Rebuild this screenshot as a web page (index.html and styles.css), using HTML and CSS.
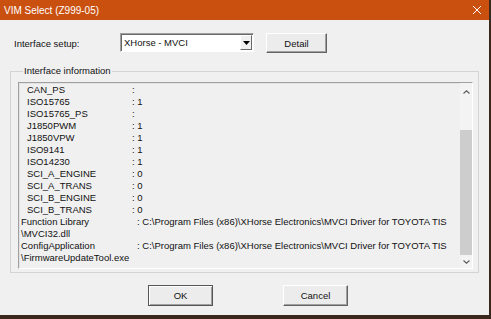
FILE: index.html
```html
<!DOCTYPE html>
<html lang="en">
<head>
  <meta charset="UTF-8" />
  <title>VIM Select (Z999-05)</title>
  <link rel="stylesheet" href="styles.css">
</head>
<body>
  <div class="window">
    <div class="titlebar">
      <span class="title">VIM Select (Z999-05)</span>
      <svg class="close" width="10" height="10" viewBox="0 0 10 10">
        <path d="M1 1 L9 9 M9 1 L1 9" stroke="#fff" stroke-width="1" fill="none" />
      </svg>
    </div>

    <div class="content">
      <!-- Interface setup row -->
      <div class="setup-row">
        <span class="setup-label">Interface setup:</span>
        <div class="combo">
          <span class="combo-text">XHorse - MVCI</span>
          <span class="combo-btn">
            <svg width="7" height="4" viewBox="0 0 7 4"><path d="M0 0 H7 L3.5 4 Z" fill="#000" /></svg>
          </span>
        </div>
        <button class="btn btn-detail">Detail</button>
      </div>

      <!-- Interface information -->
      <fieldset class="group">
        <legend>Interface information</legend>
        <div class="listbox">
          <div class="list-rows">
            <div class="row sub"><span class="key">CAN_PS</span><span class="val">:</span></div>
            <div class="row sub"><span class="key">ISO15765</span><span class="val">: 1</span></div>
            <div class="row sub"><span class="key">ISO15765_PS</span><span class="val">:</span></div>
            <div class="row sub"><span class="key">J1850PWM</span><span class="val">: 1</span></div>
            <div class="row sub"><span class="key">J1850VPW</span><span class="val">: 1</span></div>
            <div class="row sub"><span class="key">ISO9141</span><span class="val">: 1</span></div>
            <div class="row sub"><span class="key">ISO14230</span><span class="val">: 1</span></div>
            <div class="row sub"><span class="key">SCI_A_ENGINE</span><span class="val">: 0</span></div>
            <div class="row sub"><span class="key">SCI_A_TRANS</span><span class="val">: 0</span></div>
            <div class="row sub"><span class="key">SCI_B_ENGINE</span><span class="val">: 0</span></div>
            <div class="row sub"><span class="key">SCI_B_TRANS</span><span class="val">: 0</span></div>
            <div class="row"><span class="key">Function Library</span><span class="val">: C:\Program Files (x86)\XHorse Electronics\MVCI Driver for TOYOTA TIS</span></div>
            <div class="row"><span class="key">\MVCI32.dll</span></div>
            <div class="row"><span class="key">ConfigApplication</span><span class="val">: C:\Program Files (x86)\XHorse Electronics\MVCI Driver for TOYOTA TIS</span></div>
            <div class="row"><span class="key">\FirmwareUpdateTool.exe</span></div>
          </div>
          <div class="scrollbar">
            <div class="sb-arrow sb-up">
              <svg width="7" height="4" viewBox="0 0 7 4"><path d="M0.5 3.5 L3.5 0.8 L6.5 3.5" stroke="#606060" stroke-width="1.2" fill="none" /></svg>
            </div>
            <div class="sb-gap"></div>
            <div class="sb-thumb"></div>
            <div class="sb-arrow sb-down">
              <svg width="7" height="4" viewBox="0 0 7 4"><path d="M0.5 0.5 L3.5 3.2 L6.5 0.5" stroke="#606060" stroke-width="1.2" fill="none" /></svg>
            </div>
          </div>
        </div>
      </fieldset>

      <!-- Buttons -->
      <div class="button-row">
        <button class="btn btn-default">OK</button>
        <button class="btn">Cancel</button>
      </div>
    </div>
  </div>
</body>
</html>
```

FILE: styles.css
```css
html, body {
  margin: 0;
  height: 100%;
}

body {
  background-color: #3a281d;
  font-family: "Liberation Sans", Arial, sans-serif;
  font-size: 9.5px;
  color: #111;
  overflow: hidden;
}

.window {
  width: 489px;
  height: 315px;
  background-color: #f0f0f0;
  display: flex;
  flex-direction: column;
}

.titlebar {
  height: 20px;
  background-color: #ca5010;
  color: #fff;
  display: flex;
  align-items: center;
  justify-content: space-between;
  padding: 0 7px 0 4px;
  font-size: 10px;
}

.close {
  display: block;
}

.content {
  padding: 13px 10px 0 10px;
  display: flex;
  flex-direction: column;
}

/* top row */
.setup-row {
  display: flex;
  align-items: center;
  height: 20px;
}

.setup-label {
  width: 106px;
  margin-left: 4px;
}

.combo {
  width: 134px;
  height: 19px;
  box-sizing: border-box;
  background: #fff;
  border: 1px solid;
  border-color: #a0a0a0 #fff #fff #a0a0a0;
  box-shadow: inset 1px 1px 0 #696969;
  display: flex;
  align-items: center;
  justify-content: space-between;
  padding: 1px 1px 1px 3px;
  align-self: flex-start;
}

.combo-btn {
  width: 12px;
  height: 15px;
  box-sizing: border-box;
  background: #f0f0f0;
  border: 1px solid;
  border-color: #fff #696969 #696969 #fff;
  display: flex;
  align-items: center;
  justify-content: center;
}

.combo-btn svg {
  display: block;
}

.btn {
  font-family: inherit;
  font-size: 9.5px;
  color: #111;
  background: #ececec;
  border: 1px solid;
  border-color: #fff #646464 #646464 #fff;
  box-shadow: inset -1px -1px 0 #a0a0a0;
  padding: 0;
  width: 65px;
  height: 21px;
  box-sizing: border-box;
}

.btn-detail {
  margin-left: 12px;
  width: 61px;
  height: 20px;
}

.btn-default {
  border-color: #555;
  box-shadow: inset 1px 1px 0 #fff, inset -1px -1px 0 #a0a0a0;
}

/* group box */
.group {
  margin: 12px 0 0 0;
  width: 469px;
  box-sizing: border-box;
  padding: 5px 5px 3px 7px;
  border: 1px solid #d4d4d4;
  min-width: 0;
}

.group legend {
  padding: 0 1px;
  margin-left: 5px;
  line-height: 12px;
}

.listbox {
  width: 455px;
  height: 187px;
  box-sizing: border-box;
  border: 1px solid;
  border-color: #a0a0a0 #fff #fff #a0a0a0;
  box-shadow: inset 1px 1px 0 #e3e3e3;
  display: flex;
}

.list-rows {
  flex: 1;
  padding: 1px 0 0 2px;
  white-space: nowrap;
  overflow: hidden;
}

.row {
  display: flex;
  height: 12px;
  line-height: 12px;
}

.key {
  width: 116px;
}

.row.sub .key {
  width: 105px;
  padding-left: 6px;
}

.scrollbar {
  width: 12px;
  display: flex;
  flex-direction: column;
  background: #f3f3f3;
}

.sb-arrow {
  display: flex;
  align-items: center;
  justify-content: center;
}

.sb-arrow svg {
  display: block;
}

.sb-up {
  height: 17px;
}

.sb-gap {
  height: 30px;
}

.sb-thumb {
  flex: 1;
  background: #cdcdcd;
}

.sb-down {
  height: 13px;
}

/* bottom buttons */
.button-row {
  display: flex;
  gap: 70px;
  padding-left: 138px;
  margin-top: 12px;
}
```
